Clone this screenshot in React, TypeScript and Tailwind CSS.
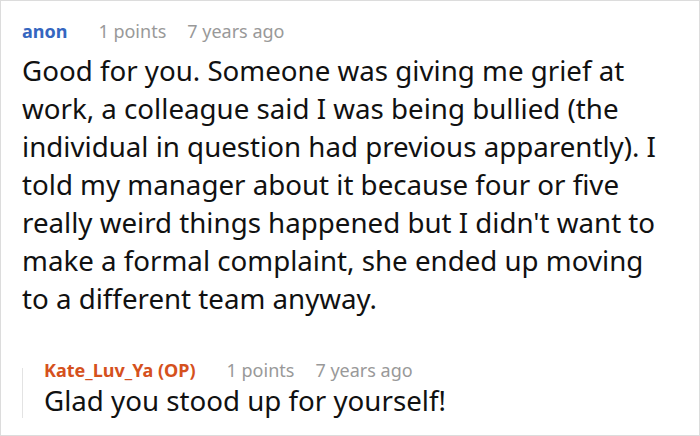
import React from "react";

export default function App() {
  return (
    <div
      className="w-[700px] h-[436px] border border-[#dcdcdc] bg-white overflow-hidden"
      style={{ fontFamily: '"Noto Sans", "Open Sans", sans-serif' }}
    >
      <div className="pl-[21px] pr-[23px] pt-[17px]">
        <div className="flex items-baseline text-[18px] leading-[26px]">
          <span className="font-bold text-[#3566c0] mr-[31px]">anon</span>
          <span className="text-[#999999] mr-[21px]">1 points</span>
          <span className="text-[#999999]">7 years ago</span>
        </div>
        <p className="mt-[7px] text-[27.7px] leading-[38px] text-[#111111]">
          Good for you. Someone was giving me grief at work, a colleague said I was being bullied (the individual in question had previous apparently). I told my manager about it because four or five really weird things happened but I didn't want to make a formal complaint, she ended up moving to a different team anyway.
        </p>
        <div className="mt-[40px] flex">
          <div className="w-px bg-[#e3e3e3] mt-[11px] mb-[1px]" />
          <div className="pl-[21px]">
            <div className="flex items-baseline text-[18px] leading-[26px]">
              <span className="font-bold text-[#d5511d] mr-[31px]">Kate_Luv_Ya (OP)</span>
              <span className="text-[#999999] mr-[21px]">1 points</span>
              <span className="text-[#999999]">7 years ago</span>
            </div>
            <p className="-mt-[2px] text-[27.7px] leading-[38px] text-[#111111]">
              Glad you stood up for yourself!
            </p>
          </div>
        </div>
      </div>
    </div>
  );
}
